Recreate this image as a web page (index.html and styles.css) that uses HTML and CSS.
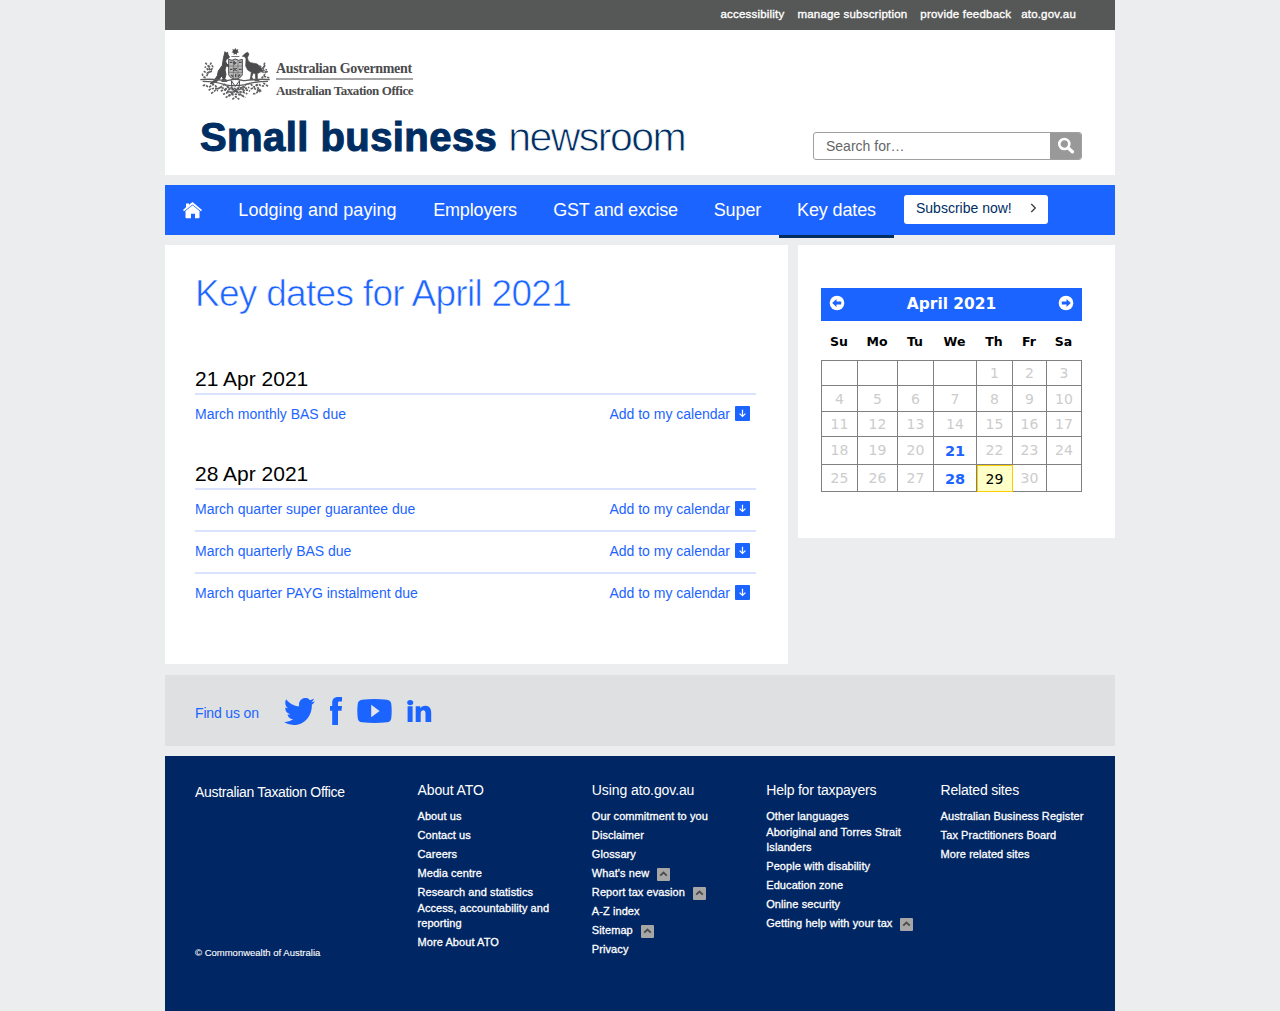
FILE: index.html
```html
<!DOCTYPE html>
<html lang="en">
<head>
<meta charset="utf-8">
<title>Key dates for April 2021 - Small business newsroom</title>
<link rel="stylesheet" href="styles.css">
</head>
<body>
<svg class="defs" width="0" height="0" aria-hidden="true">
  <symbol id="add" viewBox="0 0 15 15"><rect width="15" height="15" rx="1" fill="#1c64ff"/><path d="M7.5 3.8v6.6M4.6 7.6l2.9 2.9 2.9-2.9" fill="none" stroke="#fff" stroke-width="1.2"/></symbol>
  <symbol id="up" viewBox="0 0 13 13"><rect width="13" height="13" rx="1" fill="#a6a6a6"/><path d="M3.2 7.6l3.3-3 3.3 3" fill="none" stroke="#4c4c4c" stroke-width="1.9"/></symbol>
</svg>
<div class="page">
  <nav class="topbar">
    <a>accessibility</a><a>manage subscription</a><a>provide feedback</a><a>ato.gov.au</a>
  </nav>
  <header class="header">
    <div class="brand">
      <div class="gov">
        <svg class="crest" viewBox="12 15 216 159" width="72" height="53" fill="#4b4b4d">
          <path d="M121 18l3 5 6-2-2 6 4 4-6 2-1 6-4-4-5 4 0-6-6-2 4-4-2-6 6 2zM109 42h24v2h-24z"/>
          <path d="M90 29l4 4 4-2 1 8 4 5-2 5-7 2-2 8 4 8 9 3-1 4-11-2-3 12 3 13-4 15 7 3v3H80l4-9-4-7-9 12-16 10-10 1 13-10 9-14 3-14 12-17 3-20z" stroke="#4b4b4d" stroke-width="3"/>
          <path d="M151 34l7-3 4 5-2 5-3 6 3 10 7 5 20 4 12 12 7 14-10-4-4 5-5 1v18l6 4h-14l3-4-1-17-6-2-5 12 5 9-10-1 2-9 2-13-11-7-6-12 1-22-4-6-7-1z" stroke="#4b4b4d" stroke-width="2"/>
          <path d="M101 52l10 3 10-4 10 4 11-3v43c0 10-11 14-21 18-10-4-20-8-20-18z" fill="#bbb" stroke="#4b4b4d" stroke-width="3"/>
          <path d="M101 72h41M102 91h39M115 54v54M129 54v54" stroke="#666" stroke-width="2"/>
          <path d="M104 61h8M118 58v10M114 63h10M132 61h8M105 82h7m3-4l10 8m0-8l-10 8m17-4h8M108 99l7 5m7-9v11m7-3l7-5" fill="none" stroke="#4b4b4d" stroke-width="4"/>
          <path d="M16 113c28-4 61 1 80 3l25-5 25 5c19-2 52-7 78-3M23 118c29 0 47 3 66 10 12 4 42 4 62 0 20-7 43-10 68-10" fill="none" stroke="#5c5c5e" stroke-width="4"/>
          <g fill="none" stroke="#606062" stroke-width="5" stroke-dasharray="7 3">
            <path d="M31 62c7 9 16 14 12 27l-9 14M49 62L38 82l-9-8M51 88l-15 5-10-5M32 107c-8-2-12-8-8-14M50 70c9 6-2 13-5 17"/>
            <path d="M193 71l12 9 6-13M193 90l13-5 14 6M207 103l7-22M223 108l-17-6-7 7M209 62l-3 15"/>
            <path d="M24 132c8-9 14 8 22 1s12-7 19 3 13-4 21-7M41 145c13-12 25 1 35-9M48 154c10-3 11-13 21-8M80 137c22 8 59 8 83-1M78 148c15-15 25 13 42-1 15 14 30-12 45 1M84 157c20-10 51-12 73-1M92 167l30-20 29 20M87 126l19 15m49-15l-19 15"/>
            <path d="M157 126c18-6 14 19 27 4 10-8 12 6 26 1M167 141c13-8 17 8 32 5M174 155c14 2 12-11 24-13M184 126l11 26M205 123l16 11"/>
            <path d="M96 135l23 5 32-5M100 162c14-7 30-7 44 0M112 172l10-8 11 8"/>
          </g>
          <path d="M109 116l12 17 13-17-2 22-10 12-11-12z" fill="none" stroke="#4b4b4d" stroke-width="3"/>
        </svg>
        <div class="govtext"><span class="g1">Australian Government</span><span class="g2">Australian Taxation Office</span></div>
      </div>
      <div class="title"><b>Small business</b><span>newsroom</span></div>
    </div>
    <div class="search">
      <span class="field">Search for…</span>
      <span class="go"><svg width="18" height="18" viewBox="0 0 18 18" fill="none" stroke="#fff"><circle cx="7.3" cy="7" r="5" stroke-width="2.6"/><path d="M11 10.8l4.4 4" stroke-width="3.4" stroke-linecap="round"/></svg></span>
    </div>
  </header>
  <nav class="nav">
    <a class="home"><svg width="19" height="17" viewBox="0 0 19 17" fill="#fff"><path d="M0 8L3 5.3V1.6h3v1.2L9.500 0 19 8l-1 1.300L9.500 2.400 1 9.300z"/><path d="M9.500 3.200L16.500 9V15.500q0 .8-.8.8H12v-4.500H8v4.500H3.300q-.8 0-.8-.8V9z"/></svg></a>
    <a class="n1">Lodging and paying</a><a class="n2">Employers</a><a class="n3">GST and excise</a><a class="n4">Super</a><a class="on">Key dates</a>
    <span class="subscribe">Subscribe now!<svg width="7" height="10" viewBox="0 0 7 10" fill="none" stroke="#333" stroke-width="1.2"><path d="M1.300 1l4 4-4 4"/></svg></span>
  </nav>
  <div class="content">
    <main class="main">
      <h1>Key dates for April 2021</h1>
      <section>
        <h2>21 Apr 2021</h2>
        <div class="event"><a>March monthly BAS due</a><a class="add">Add to my calendar<svg width="15" height="15"><use href="#add"/></svg></a></div>
      </section>
      <section>
        <h2>28 Apr 2021</h2>
        <div class="event"><a>March quarter super guarantee due</a><a class="add">Add to my calendar<svg width="15" height="15"><use href="#add"/></svg></a></div>
        <div class="event"><a>March quarterly BAS due</a><a class="add">Add to my calendar<svg width="15" height="15"><use href="#add"/></svg></a></div>
        <div class="event"><a>March quarter PAYG instalment due</a><a class="add">Add to my calendar<svg width="15" height="15"><use href="#add"/></svg></a></div>
      </section>
    </main>
    <aside class="aside">
      <div class="calhead">
        <svg width="16" height="16" viewBox="0 0 16 16"><circle cx="8" cy="8" r="7.300" fill="#fff"/><path d="M3.200 8l4.300-4v2.600h4.700v2.800H7.500V12z" fill="#1c64ff"/></svg>
        <span>April 2021</span>
        <svg width="16" height="16" viewBox="0 0 16 16"><circle cx="8" cy="8" r="7.300" fill="#fff"/><path d="M12.800 8L8.500 4v2.600H3.800v2.800h4.700V12z" fill="#1c64ff"/></svg>
      </div>
      <div class="days"><b>Su</b><b>Mo</b><b>Tu</b><b>We</b><b>Th</b><b>Fr</b><b>Sa</b></div>
      <div class="cal">
        <i></i><i></i><i></i><i></i><i>1</i><i>2</i><i>3</i>
        <i class="low">4</i><i class="low">5</i><i class="low">6</i><i class="low">7</i><i class="low">8</i><i class="low">9</i><i class="low">10</i>
        <i>11</i><i>12</i><i>13</i><i>14</i><i>15</i><i>16</i><i>17</i>
        <i class="low">18</i><i class="low">19</i><i class="low">20</i><i class="key">21</i><i class="low">22</i><i class="low">23</i><i class="low">24</i>
        <i class="low">25</i><i class="low">26</i><i class="low">27</i><i class="key">28</i><i class="today">29</i><i class="low">30</i><i></i>
      </div>
    </aside>
  </div>
  <div class="social">
    <span>Find us on</span>
    <svg class="tw" width="31" height="27" viewBox="0 2.250 24 19.500" preserveAspectRatio="none"><path d="M23.953 4.57a10 10 0 01-2.825.775 4.958 4.958 0 002.163-2.723c-.951.555-2.005.959-3.127 1.184a4.92 4.92 0 00-8.384 4.482C7.69 8.095 4.067 6.13 1.64 3.162a4.822 4.822 0 00-.666 2.475c0 1.71.87 3.213 2.188 4.096a4.904 4.904 0 01-2.228-.616v.06a4.923 4.923 0 003.946 4.827 4.996 4.996 0 01-2.212.085 4.936 4.936 0 004.604 3.417 9.867 9.867 0 01-6.102 2.105c-.39 0-.779-.023-1.17-.067a13.995 13.995 0 007.557 2.209c9.053 0 13.998-7.496 13.998-13.985 0-.21 0-.42-.015-.63A9.935 9.935 0 0024 4.59z"/></svg>
    <svg class="fb" width="12" height="28" viewBox="0 0 12 28"><path d="M2.200 28V13.700H0V9h2.200V6C2.200 2 4.200 0 8 0h4v4.400H9.600C8.300 4.400 8 5 8 6.200V9h4l-.5 4.700H8V28z"/></svg>
    <svg class="yt" width="35" height="24" viewBox="0 0 35 24"><path d="M5 .8Q17.500-.6 30 .8q3.600.4 4.200 3.800 1 7.400 0 14.800-.6 3.400-4.200 3.800-12.500 1.400-25 0-3.600-.4-4.200-3.800-1-7.400 0-14.800Q1.400 1.200 5 .8z"/><path d="M14.200 5.800v12.400l8.400-6.200z" fill="#e3e5ea"/></svg>
    <svg class="in" width="25" height="23" viewBox="0 0 25 23"><ellipse cx="3.200" cy="2.600" rx="3" ry="2.600"/><path d="M.600 6.200h5V22h-5zM8.700 6.200h4.600v2.200c1-1.700 2.600-2.700 5-2.700 4.300 0 5.900 2.900 5.900 7V22h-5.700v-8.200c0-2.300-.4-3.500-2.100-3.500-2 0-2.700 1.300-2.700 3.500V22h-5z"/></svg>
  </div>
  <footer class="footer">
    <div class="org"><h3>Australian Taxation Office</h3><small>© Commonwealth of Australia</small></div>
    <div class="col"><h3>About ATO</h3><a>About us</a><a>Contact us</a><a>Careers</a><a>Media centre</a><a>Research and statistics</a><a class="two">Access, accountability and reporting</a><a>More About ATO</a></div>
    <div class="col"><h3>Using ato.gov.au</h3><a>Our commitment to you</a><a>Disclaimer</a><a>Glossary</a><a>What's new<svg width="13" height="13"><use href="#up"/></svg></a><a>Report tax evasion<svg width="13" height="13"><use href="#up"/></svg></a><a>A-Z index</a><a>Sitemap<svg width="13" height="13"><use href="#up"/></svg></a><a>Privacy</a></div>
    <div class="col"><h3>Help for taxpayers</h3><a>Other languages</a><a class="two">Aboriginal and Torres Strait Islanders</a><a>People with disability</a><a>Education zone</a><a>Online security</a><a>Getting help with your tax<svg width="13" height="13"><use href="#up"/></svg></a></div>
    <div class="col"><h3>Related sites</h3><a>Australian Business Register</a><a>Tax Practitioners Board</a><a>More related sites</a></div>
  </footer>
</div>
</body>
</html>
```
FILE: styles.css
```css
* { box-sizing: border-box; }
body { margin: 0; background: #ebedef; font-family: "Liberation Sans", Arial, sans-serif; font-size: 14px; color: #000; }
.defs { display: block; }
h1, h2, h3 { margin: 0; font-weight: normal; }
svg { flex: none; }
.page { width: 950px; margin: 0 auto; height: 1011px; overflow: hidden; }

.topbar { height: 30px; background: #565857; color: #fff; display: flex; justify-content: flex-end; padding: 7px 39px 0 0; font-size: 11.500px; line-height: 14px; letter-spacing: .2px; -webkit-text-stroke: .35px #fff; }
.topbar a { margin-left: 13px; white-space: nowrap; }
.topbar a:last-child { margin-left: 10px; }

.header { height: 145px; background: #fff; display: flex; justify-content: space-between; padding: 17px 33px 0 34px; }
.gov { display: flex; height: 53px; }
.govtext { width: 137px; margin-left: 5px; padding-top: 13px; font-family: "Liberation Serif", "Times New Roman", serif; font-weight: bold; color: #4b4b4d; white-space: nowrap; }
.govtext span { display: block; line-height: 18px; }
.g1 { font-size: 14px; letter-spacing: -.33px; height: 20px; border-bottom: 2px solid #a5a5a6; }
.g2 { font-size: 13px; letter-spacing: -.42px; padding-top: 2px; }
.title { color: #002d62; font-size: 40px; line-height: 46px; margin-top: 14px; padding-left: 1px; display: flex; white-space: nowrap; }
.title b { letter-spacing: .43px; -webkit-text-stroke: 1.100px #002d62; }
.title span { margin-left: 11px; font-size: 41px; letter-spacing: -1.550px; -webkit-text-stroke: .8px #fff; }
.search { display: flex; width: 269px; height: 28px; margin-top: 85px; border: 1px solid #a0a0a0; border-radius: 3px; overflow: hidden; }
.field { flex: 1; padding-left: 12px; line-height: 27px; color: #666; }
.go { width: 31px; background: #999; display: flex; align-items: center; justify-content: center; }

.nav { height: 50px; margin-top: 10px; background: #1c64ff; color: #fff; display: flex; font-size: 18px; line-height: 50px; }
.nav a { white-space: nowrap; text-align: center; }
.nav .home { padding: 17px 18px 0; width: 55px; line-height: 0; }
.nav .n1 { width: 195px; letter-spacing: .07px; }
.nav .n2 { width: 120px; letter-spacing: -.15px; }
.nav .n3 { width: 161px; letter-spacing: -.22px; }
.nav .n4 { width: 83px; letter-spacing: -.1px; }
.nav .on { width: 115px; letter-spacing: -.12px; height: 53px; border-bottom: 3px solid #002d62; }
.subscribe { width: 144px; height: 29px; margin: 10px 0 0 10px; background: #fff; border-radius: 3px; color: #002d62; font-size: 14px; line-height: 27px; padding: 0 11px 0 12px; display: flex; justify-content: space-between; }
.subscribe svg { margin-top: 8px; }

.content { display: flex; align-items: flex-start; gap: 10px; margin-top: 10px; }
.main { width: 623px; height: 419px; background: #fff; padding: 26px 32px 0 30px; }
h1 { color: #1c64ff; font-size: 37px; line-height: 46px; letter-spacing: -.700px; -webkit-text-stroke: .65px #fff; height: 94px; white-space: nowrap; }
section { margin-bottom: 25px; }
h2 { font-size: 21px; line-height: 27px; height: 28px; }
.event { display: flex; justify-content: space-between; height: 42px; padding: 11px 6px 0 0; border-top: 2px solid #d9e2ff; color: #1c64ff; line-height: 16px; }
.add { display: flex; gap: 5px; }

.aside { width: 317px; height: 293px; background: #fff; padding: 43px 33px 0 23px; font-family: Verdana, "DejaVu Sans", sans-serif; }
.calhead { height: 33px; background: #1c64ff; color: #fff; display: flex; justify-content: space-between; padding: 7px 8px 0; font-size: 15.400px; font-weight: bold; line-height: 19px; }
.days, .cal { display: grid; grid-template-columns: 36px 40px 36px 43px 36px 34px 35px; text-align: center; }
.days { height: 39px; line-height: 41px; font-size: 12.500px; }
.cal { grid-template-rows: 25px 26px 25px 28px 27px; border: solid #808080; border-width: 1px 0 0 1px; }
.cal i { font-style: normal; color: #ccc; border: solid #808080; border-width: 0 1px 1px 0; line-height: 25px; font-size: 14px; }
.cal .low { line-height: 27px; }
.cal .key { color: #1c64ff; font-weight: bold; line-height: 28px; font-size: 14.500px; }
.cal .today { color: #000; background: #ffffc8; border-color: #fc0; box-shadow: inset 1px 1px #fc0; line-height: 28px; }

.social { margin-top: 11px; height: 71px; background: #dfe0e2; padding-left: 30px; display: flex; align-items: flex-start; color: #1c64ff; fill: #1c64ff; }
.social span { width: 89px; margin-top: 30px; line-height: 17px; letter-spacing: -.15px; }
.tw { margin-top: 23px; }
.fb { margin: 22px 0 0 15px; }
.yt { margin: 24px 0 0 15px; }
.in { margin: 25px 0 0 15px; }

.footer { margin-top: 10px; height: 255px; background: #002663; color: #fff; display: flex; padding: 25px 0 0 30px; }
.footer h3 { font-size: 14px; line-height: 18px; height: 26px; white-space: nowrap; letter-spacing: -.2px; }
.footer .col:nth-child(2) h3, .footer .col:nth-child(3) h3 { letter-spacing: -.1px; }
.org { width: 222.500px; display: flex; flex-direction: column; }
.footer .org h3 { margin-top: 2px; letter-spacing: -.33px; }
.org small { margin-top: 137px; font-size: 9.500px; line-height: 13px; -webkit-text-stroke: .1px #fff; }
.col { width: 174.400px; display: flex; flex-direction: column; font-size: 11px; letter-spacing: .08px; }
.col a { height: 19px; line-height: 19px; display: flex; white-space: nowrap; -webkit-text-stroke: .3px #fff; }
.col a.two { display: block; width: 145px; height: 31px; line-height: 15px; margin-top: -1px; margin-bottom: 1px; white-space: normal; }
.col svg { margin: 4px 0 0 8px; }
```
